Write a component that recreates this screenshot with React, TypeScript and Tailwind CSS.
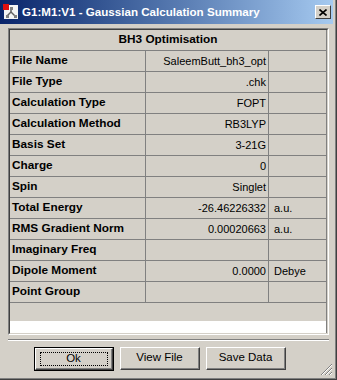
import React from "react";

const rows: [string, string, string][] = [
  ["File Name", "SaleemButt_bh3_opt", ""],
  ["File Type", ".chk", ""],
  ["Calculation Type", "FOPT", ""],
  ["Calculation Method", "RB3LYP", ""],
  ["Basis Set", "3-21G", ""],
  ["Charge", "0", ""],
  ["Spin", "Singlet", ""],
  ["Total Energy", "-26.46226332", "a.u."],
  ["RMS Gradient Norm", "0.00020663", "a.u."],
  ["Imaginary Freq", "", ""],
  ["Dipole Moment", "0.0000", "Debye"],
  ["Point Group", "", ""],
];

function Btn({ label, def }: { label: string; def?: boolean }) {
  return (
    <div className={def ? "border border-black" : ""}>
      <div className="border-t border-l border-white border-r border-b border-r-[#404040] border-b-[#404040]">
        <div
          className={
            "flex items-center justify-center border-r border-b border-r-[#808080] border-b-[#808080] bg-[#d4d0c8] text-[11.5px] text-black " +
            (def ? "w-[76px] h-[20px]" : "w-[78px] h-[21px]")
          }
        >
          {def ? (
            <div className="w-[68px] h-[14px] border border-dotted border-black flex items-center justify-center">
              {label}
            </div>
          ) : (
            label
          )}
        </div>
      </div>
    </div>
  );
}

export default function App() {
  return (
    <div
      className="w-[337px] h-[380px] bg-[#d4d0c8] border-r border-b border-[#404040] overflow-hidden"
      style={{ fontFamily: '"Liberation Sans", Arial, sans-serif' }}
    >
      <div className="relative w-[336px] h-[379px] border-r border-b border-[#808080] flex flex-col">
        {/* title bar */}
        <div className="shrink-0 w-[333px] h-[24px] bg-gradient-to-r from-[#0a246a] to-[#a6caf0] flex items-center pl-[3px] pr-[2px]">
          <svg width="16" height="16" viewBox="0 0 16 16" className="shrink-0">
            <rect x="1" y="1" width="14" height="14" fill="#f4f4f4" />
            <rect x="0" y="0" width="6" height="6" fill="#e01010" />
            <line x1="8" y1="4" x2="8" y2="8" stroke="#606060" strokeWidth="1.5" />
            <line x1="8" y1="8" x2="4" y2="12" stroke="#606060" strokeWidth="1.5" />
            <line x1="8" y1="8" x2="12" y2="12" stroke="#606060" strokeWidth="1.5" />
            <rect x="7" y="3" width="3" height="3" fill="#808080" />
            <rect x="3" y="11" width="3" height="3" fill="#808080" />
            <rect x="11" y="11" width="3" height="3" fill="#808080" />
          </svg>
          <span className="ml-[3px] text-white font-bold text-[11.6px] whitespace-nowrap">
            G1:M1:V1 - Gaussian Calculation Summary
          </span>
          <div className="flex-1" />
          <div className="w-[16px] h-[14px] border-t border-l border-white border-r border-b border-r-[#404040] border-b-[#404040] bg-[#d4d0c8] flex items-center justify-center">
            <svg width="8" height="7" viewBox="0 0 8 7">
              <path d="M0.5 0.5 L7.5 6.5 M7.5 0.5 L0.5 6.5" stroke="#000" strokeWidth="1.6" />
            </svg>
          </div>
        </div>

        {/* grid frame */}
        <div className="shrink-0 ml-[8px] mt-[4px] w-[321px] border-t border-l border-[#808080] border-r border-b border-r-white border-b-white">
          <div className="border-t border-l border-[#404040] border-r border-b border-r-[#d4d0c8] border-b-[#d4d0c8]">
            <div className="h-[21px] border-b border-r border-[#808080] flex items-center justify-center font-bold text-[11.8px] text-black">
              BH3 Optimisation
            </div>
            {rows.map(([a, b, c]) => (
              <div key={a} className="flex h-[21px] border-b border-[#808080] text-[11px] text-black">
                <div className="w-[136px] border-r border-[#808080] pl-[2px] font-bold text-[11.8px] flex items-center whitespace-nowrap">
                  {a}
                </div>
                <div className="w-[123px] border-r border-[#808080] pr-[2px] flex items-center justify-end whitespace-nowrap">
                  {b}
                </div>
                <div className="w-[58px] border-r border-[#808080] pl-[5px] flex items-center whitespace-nowrap">
                  {c}
                </div>
              </div>
            ))}
            <div className="h-[18px] border-r border-[#808080]" />
            <div className="h-[12px] bg-white border-r border-[#808080]" />
          </div>
        </div>

        {/* separator */}
        <div className="shrink-0 ml-[8px] mt-[4px] w-[321px] h-[2px] border-t border-[#808080] border-b border-b-white" />

        {/* buttons */}
        <div className="shrink-0 flex items-start mt-[6px] ml-[34px] gap-[6px]">
          <Btn label="Ok" def />
          <Btn label="View File" />
          <Btn label="Save Data" />
        </div>

        <svg width="13" height="13" viewBox="0 0 13 13" className="absolute right-[2px] bottom-[2px]">
          <path d="M12 1 L1 12 M12 5 L5 12 M12 9 L9 12" stroke="#808080" strokeWidth="1" />
          <path d="M12 2 L2 12 M12 6 L6 12 M12 10 L10 12" stroke="#ffffff" strokeWidth="1" />
        </svg>
      </div>
    </div>
  );
}
